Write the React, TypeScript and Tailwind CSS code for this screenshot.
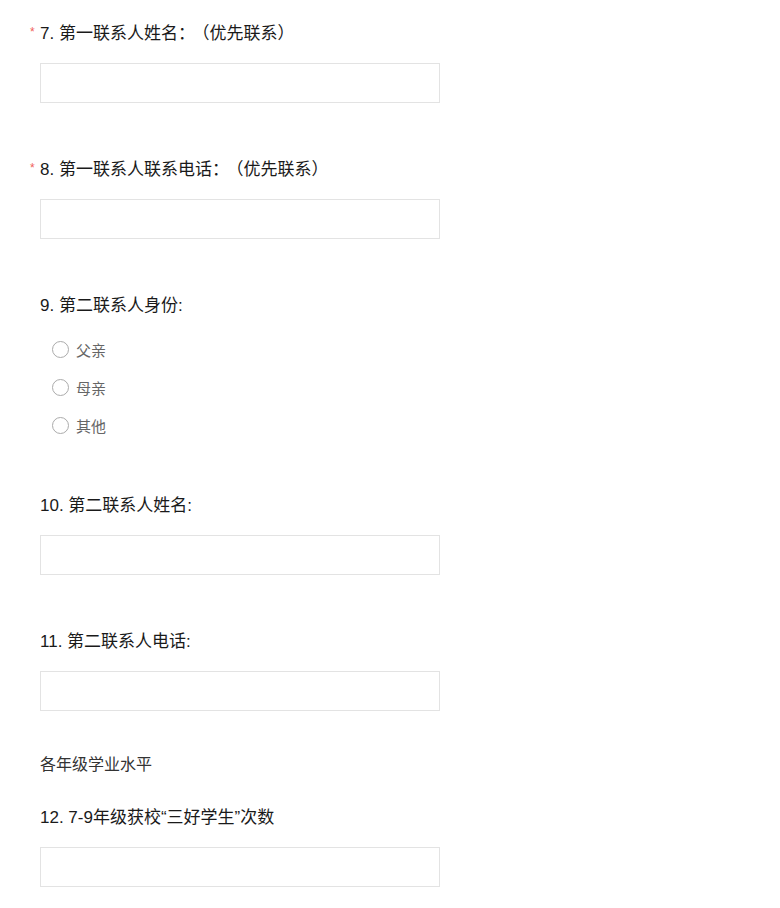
import React from 'react';

const font = { fontFamily: '"Liberation Sans", "Noto Sans CJK SC", sans-serif' };

function Title({ text, note, required }: { text: string; note?: string; required?: boolean }) {
  return (
    <div className="relative h-6 text-[17px] leading-6 text-[#1a1a1a]">
      {required && (
        <span className="absolute left-[-10px] top-[2px] text-xs text-[#f0605a]">*</span>
      )}
      {text}
      {note && <span className="ml-[6px]">{note}</span>}
    </div>
  );
}

function TextInput() {
  return <div className="mt-[17px] h-10 w-[400px] border border-[#e3e3e3] bg-white" />;
}

function Radio({ label }: { label: string }) {
  return (
    <div className="flex h-[38px] items-center pl-3">
      <span className="mb-[4px] h-[17px] w-[17px] rounded-full border border-[#ababab] bg-white" />
      <span className="ml-[7px] text-[15px] text-[#666]">{label}</span>
    </div>
  );
}

export default function App() {
  return (
    <div className="min-h-[908px] bg-white pl-10 pt-[22px]" style={font}>
      <Title text="7. 第一联系人姓名：" note="（优先联系）" required />
      <TextInput />

      <div className="mt-[55px]">
        <Title text="8. 第一联系人联系电话：" note="（优先联系）" required />
        <TextInput />
      </div>

      <div className="mt-[55px]">
        <Title text="9. 第二联系人身份:" />
        <div className="mt-[14px]">
          <Radio label="父亲" />
          <Radio label="母亲" />
          <Radio label="其他" />
        </div>
      </div>

      <div className="mt-[48px]">
        <Title text="10. 第二联系人姓名:" />
        <TextInput />
      </div>

      <div className="mt-[55px]">
        <Title text="11. 第二联系人电话:" />
        <TextInput />
      </div>

      <div className="mt-[44px] h-5 text-base leading-5 text-[#333]">各年级学业水平</div>

      <div className="mt-[31px]">
        <Title text="12. 7-9年级获校“三好学生”次数" />
        <TextInput />
      </div>
    </div>
  );
}
